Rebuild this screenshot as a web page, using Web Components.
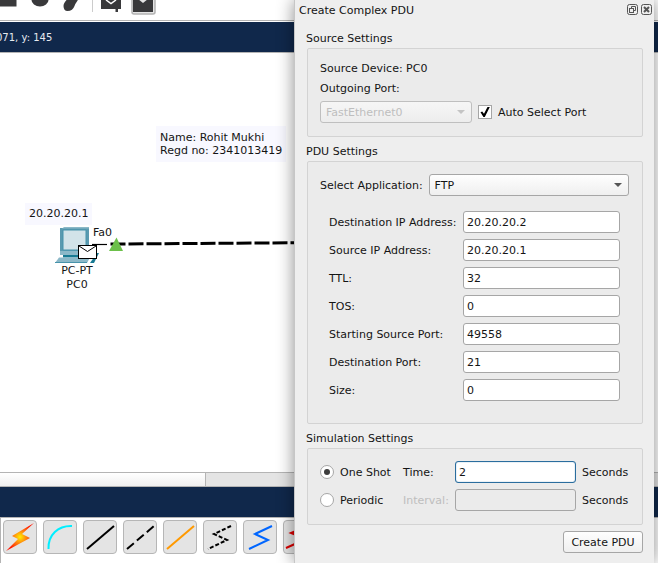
<!DOCTYPE html>
<html lang="en">
<head>
<meta charset="utf-8">
<title>Create Complex PDU</title>
<style>
  html, body { height: 100%; margin: 0; }
  body { font: 11px/14px "DejaVu Sans", sans-serif; color: #141414; background: #fff; overflow: hidden; }
</style>
</head>
<body>
<sim-desktop></sim-desktop>

<template id="sim-desktop">
  <style>
    :host { display: block; position: relative; height: 100%; overflow: hidden; }
    main { display: flex; flex-direction: column; height: 100%; }
    .band { flex: none; height: 30px; display: flex; align-items: center; background: #10284b; color: #e6eaf0; font-size: 10px; border-bottom: 1px solid #b4b4b4; }
    .coords { margin-left: -4px; padding-top: 2px; }
    canvas-view { flex: 1; }
    .scroll { flex: none; height: 13px; display: flex; border: solid #b4b4b4; border-width: 1px 0; background: #e4e4e4; }
    .thumb { width: 205px; border-right: 1px solid #b4b4b4; background: linear-gradient(#fff, #f0f0f0); }
    pdu-dialog { position: absolute; top: 0; bottom: 0; left: 294px; right: 4px; }
  </style>
  <main>
    <tool-strip></tool-strip>
    <div class="band"><span class="coords">071, y: 145</span></div>
    <canvas-view></canvas-view>
    <div class="scroll"><div class="thumb"></div></div>
    <div class="band"></div>
    <cable-bar></cable-bar>
  </main>
  <pdu-dialog></pdu-dialog>
</template>

<template id="tool-strip">
  <style>
    :host { display: block; flex: none; height: 20px; border-bottom: 1px solid #b4b4b4; margin-bottom: 1px; overflow: hidden; }
    svg { display: block; }
  </style>
  <svg width="294" height="20" aria-hidden="true">
    <rect x="-4" y="-8" width="20.500" height="14.500" fill="#39393b"/>
    <ellipse cx="40" cy="0" rx="8.500" ry="6.500" fill="#39393b"/>
    <path d="M63.500 6C63.500 2 67 1 68 -3L78 -3C79 1 75.500 2 74.500 6C73.500 9 71 11 67.500 11C65 11 63.500 9 63.500 6Z" fill="#39393b"/>
    <path d="M92.500 0V12" stroke="#ccc"/>
    <path d="M101 0H121V9H118V12H115.500V9H101Z" fill="#39393b"/>
    <path d="M106 0L111 3.500L116 0" fill="none" stroke="#fff" stroke-width="1.500"/>
    <rect x="132" y="-8" width="23" height="22" rx="2" fill="#e5e5e5" stroke="#b2b2b2" stroke-width="1.500"/>
    <path d="M133 0H153V12H133Z" fill="#39393b"/>
    <path d="M138 -1L143 3L148 -1Z" fill="#e5e5e5"/>
  </svg>
</template>

<template id="canvas-view">
  <style>
    :host { display: block; position: relative; min-height: 0; overflow: hidden; background: #fff; }
    svg, .note, .tag { position: absolute; }
    svg { left: 0; top: 0; }
    .note { background: #f8f8ff; white-space: nowrap; }
    .owner { left: 156px; top: 73px; padding: 5px 4px; line-height: 13px; }
    .addr { left: 25px; top: 150px; padding: 4px; }
    .port { left: 93px; top: 173px; }
    .name { left: 77px; top: 211px; transform: translateX(-50%); text-align: center; white-space: nowrap; }
  </style>
  <div class="note owner">Name: Rohit Mukhi<br>Regd no: 2341013419</div>
  <div class="note addr">20.20.20.1</div>
  <svg width="500" height="300" aria-hidden="true">
    <path d="M92 191.500H107" stroke="#000" stroke-width="1.200"/>
    <path d="M110.500 191L500 188.500" stroke="#000" stroke-width="3" stroke-dasharray="15 3"/>
    <path d="M109 198L116.500 184.500L123 198Z" fill="#6cc04a"/>
    <path d="M60 175H89V202H60Z" fill="#5a9ab0"/>
    <path d="M64 174H89V175.500H62Z" fill="#8bb8c8"/>
    <path d="M63 177H86V197H63Z" fill="#d2e3e9" stroke="#4793ab"/>
    <path d="M60 198H90V202H60Z" fill="#8bb8c8"/>
    <path d="M63 202H90V204.500H63Z" fill="#177a93"/>
    <path d="M59 204.500H90L87 210H55Z" fill="#8bb8c8"/>
    <path d="M55 209H87V210H55Z" fill="#4793ab"/>
    <path d="M90 210L97 200H99L94 210Z" fill="#177a93"/>
    <rect x="78.500" y="192.500" width="18" height="13" fill="#fff" stroke="#000"/>
    <path d="M79 193L87.500 198.500L96 193" fill="none" stroke="#000"/>
  </svg>
  <div class="tag port">Fa0</div>
  <div class="tag name">PC-PT<br>PC0</div>
</template>

<template id="cable-bar">
  <style>
    :host { display: flex; flex: none; height: 45px; gap: 6px; padding: 2px 0 0 2px; border-left: 1px solid #b4b4b4; box-sizing: border-box; overflow: hidden; }
    button { flex: none; box-sizing: border-box; width: 34px; height: 34px; padding: 0; border: 1px solid #b6b6b6; border-radius: 4px; background: #e4e4e4; }
    svg { display: block; }
  </style>
  <button aria-label="Automatic connection"><svg width="32" height="32"><defs><radialGradient id="g"><stop offset="0" stop-color="#fff000"/><stop offset=".5" stop-color="#ff7a10"/><stop offset="1" stop-color="#ff1500"/></radialGradient></defs><path d="M30 2L8 15L14 18L2 30L26 17L18 13Z" fill="url(#g)"/></svg></button>
  <button aria-label="Console"><svg width="32" height="32"><path d="M4.500 28C4 14 14 4.500 28 5" fill="none" stroke="#00eeff" stroke-width="2"/></svg></button>
  <button aria-label="Copper straight-through"><svg width="32" height="32"><path d="M3 28L30 5" stroke="#000" stroke-width="2"/></svg></button>
  <button aria-label="Copper cross-over"><svg width="32" height="32"><path d="M3 28L30 5" stroke="#000" stroke-width="2" stroke-dasharray="9 4"/></svg></button>
  <button aria-label="Fiber"><svg width="32" height="32"><path d="M3 28L30 5" stroke="#ff9900" stroke-width="2"/></svg></button>
  <button aria-label="Phone"><svg width="32" height="32"><path d="M27 5L10 13L23 19L4 28" fill="none" stroke="#000" stroke-width="2" stroke-dasharray="4 2"/></svg></button>
  <button aria-label="Coaxial"><svg width="32" height="32"><path d="M28 5L11 13L24 19L5 28" fill="none" stroke="#0066ff" stroke-width="2"/></svg></button>
  <button aria-label="Serial"><svg width="32" height="32"><path d="M26 4L7 12L22 18L2 27" fill="none" stroke="#dd0000" stroke-width="2"/></svg></button>
</template>

<template id="group-section">
  <style>
    :host { display: block; }
    h2 { margin: 0 0 0 -1px; padding-top: 2px; font: inherit; line-height: 18px; }
    .box { border: 1px solid #d3d3d3; border-radius: 2px; background: #ebebeb; padding: 12px 12px 13px; }
  </style>
  <section><h2></h2><div class="box"><slot></slot></div></section>
</template>

<template id="combo-box">
  <style>
    :host { display: flex; align-items: center; gap: 6px; }
    .wrap { flex: 1; display: grid; align-items: center; }
    .wrap > * { grid-area: 1 / 1; }
    select { appearance: none; box-sizing: border-box; width: 100%; height: 22px; margin: 0; padding: 1px 20px 0 5px; font: inherit; color: inherit; border: 1px solid #a6a6a6; border-radius: 3px; background: linear-gradient(#fefefe, #efefef); }
    select:disabled { color: #bebebe; opacity: 1; border-color: #bfbfbf; background: linear-gradient(#f6f6f6, #ededed); }
    svg { justify-self: end; margin-right: 7px; pointer-events: none; fill: #555; }
    select:disabled + svg { fill: #c4c4c4; }
    label { padding-top: 2px; }
    label:empty { display: none; }
  </style>
  <label for="s"></label>
  <span class="wrap"><select id="s"></select><svg width="8" height="4" aria-hidden="true"><path d="M0 0H8L4 4Z"/></svg></span>
</template>

<template id="form-field">
  <style>
    :host { display: grid; grid-template-columns: var(--label, 134px) 1fr; align-items: center; }
    label { padding-top: 2px; }
    input { box-sizing: border-box; width: 100%; min-width: 0; height: 22px; margin: 0; padding: 1px 3px 0; font: inherit; color: inherit; border: 1px solid #a6a6a6; border-radius: 3px; background: #fff; outline: none; }
    input:disabled { background: #ebebeb; }
    :host([disabled]) label { color: #bebebe; }
    :host([active]) input { border-color: #2a6d9e; box-shadow: inset 0 0 1px #2a6d9e; }
  </style>
  <label for="i"></label><input id="i" type="text">
</template>

<template id="choice-field">
  <style>
    :host { display: block; }
    label { display: flex; align-items: center; gap: 6px; white-space: nowrap; }
    span { padding-top: 2px; }
    input { appearance: none; box-sizing: border-box; display: grid; place-content: center; width: 14px; height: 14px; margin: 0; border: 1px solid #a6a6a6; background: #fff; }
    input[type=radio] { border-radius: 50%; }
    input[type=radio]:checked::before { content: ""; width: 6px; height: 6px; border-radius: 50%; background: #3c3c3c; }
    input[type=checkbox]:checked::before { content: ""; width: 10px; height: 10px; background: #000; clip-path: polygon(5% 52%, 22% 44%, 40% 68%, 75% 0, 98% 0, 48% 100%, 34% 100%); }
  </style>
  <label><input><span></span></label>
</template>

<template id="pdu-dialog">
  <style>
    :host { display: block; box-sizing: border-box; overflow: visible; background: #eee; border: solid #c6c6c6; border-width: 0 0 0 1px; box-shadow: 0 0 16px rgba(0, 0, 0, .45); }
    header { display: flex; align-items: flex-start; gap: 3px; box-sizing: border-box; height: 20px; padding: 4px 2px 0 4px; }
    h1 { flex: 1; margin: 0; font: inherit; }
    header button { display: block; width: 11px; height: 11px; padding: 0; border: 0; background: none; }
    header svg { display: block; }
    form { display: flex; flex-direction: column; gap: 4px; padding: 8px 11px 10px 12px; }
    p { margin: 0; line-height: 20px; }
    .device { margin-top: -2px; }
    .port { display: flex; align-items: center; gap: 6px; margin: 2px 0 0; }
    .port combo-box { width: 152px; }
    .app { margin-right: 1px; }
    .fields { display: grid; gap: 6px; padding: 15px 10px 9px 9px; }
    .sim { display: grid; grid-template-columns: 77px minmax(0, 1fr) 48px; column-gap: 6px; row-gap: 6px; align-items: center; }
    .sim form-field { --label: 52px; }
    .sim > span { padding-top: 2px; }
    .create { align-self: flex-end; height: 22px; min-width: 80px; margin-top: 2px; padding: 1px 7px 0; font: inherit; color: inherit; border: 1px solid #a6a6a6; border-radius: 3px; background: linear-gradient(#fefefe, #efefef); }
  </style>
  <header>
    <h1>Create Complex PDU</h1>
    <button aria-label="Float"><svg width="11" height="11" fill="none" stroke="#555"><rect x=".5" y=".5" width="10" height="10" rx="2"/><rect x="2.500" y="4.500" width="4" height="4"/><path d="M4.500 4V2.500H8.500V6.500H7"/></svg></button>
    <button aria-label="Close"><svg width="11" height="11" fill="none" stroke="#555"><rect x=".5" y=".5" width="10" height="10" rx="2"/><path d="M3 3L8 8M8 3L3 8" stroke-width="2"/></svg></button>
  </header>
  <form>
    <group-section heading="Source Settings">
      <p class="device">Source Device: PC0</p>
      <p>Outgoing Port:</p>
      <div class="port"><combo-box name="Outgoing Port" value="FastEthernet0" disabled></combo-box><choice-field type="checkbox" label="Auto Select Port" checked></choice-field></div>
    </group-section>
    <group-section heading="PDU Settings">
      <combo-box class="app" label="Select Application:" value="FTP"></combo-box>
      <div class="fields">
        <form-field label="Destination IP Address:" value="20.20.20.2"></form-field>
        <form-field label="Source IP Address:" value="20.20.20.1"></form-field>
        <form-field label="TTL:" value="32"></form-field>
        <form-field label="TOS:" value="0"></form-field>
        <form-field label="Starting Source Port:" value="49558"></form-field>
        <form-field label="Destination Port:" value="21"></form-field>
        <form-field label="Size:" value="0"></form-field>
      </div>
    </group-section>
    <group-section heading="Simulation Settings">
      <div class="sim">
        <choice-field type="radio" label="One Shot" checked></choice-field>
        <form-field label="Time:" value="2" active></form-field><span>Seconds</span>
        <choice-field type="radio" label="Periodic"></choice-field>
        <form-field label="Interval:" disabled></form-field><span>Seconds</span>
      </div>
    </group-section>
    <button class="create" type="button">Create PDU</button>
  </form>
</template>

<script>
  class Base extends HTMLElement {
    constructor() {
      super();
      const root = this.attachShadow({ mode: "open" });
      root.append(document.getElementById(this.localName).content.cloneNode(true));
    }
    $(selector) { return this.shadowRoot.querySelector(selector); }
  }
  class GroupSection extends Base {
    connectedCallback() { this.$("h2").textContent = this.getAttribute("heading"); }
  }
  class ComboBox extends Base {
    connectedCallback() {
      const select = this.$("select");
      this.$("label").textContent = this.getAttribute("label") || "";
      if (this.hasAttribute("name")) select.setAttribute("aria-label", this.getAttribute("name"));
      select.replaceChildren(new Option(this.getAttribute("value")));
      select.disabled = this.hasAttribute("disabled");
    }
  }
  class FormField extends Base {
    connectedCallback() {
      this.$("label").textContent = this.getAttribute("label");
      this.$("input").value = this.getAttribute("value") || "";
      this.$("input").disabled = this.hasAttribute("disabled");
    }
  }
  class ChoiceField extends Base {
    connectedCallback() {
      const input = this.$("input");
      input.type = this.getAttribute("type");
      input.checked = this.hasAttribute("checked");
      this.$("span").textContent = this.getAttribute("label");
      if (input.type === "radio") {
        input.addEventListener("change", () => {
          for (const other of this.parentNode.querySelectorAll("choice-field")) {
            if (other !== this) other.$("input").checked = false;
          }
        });
      }
    }
  }
  customElements.define("group-section", GroupSection);
  customElements.define("combo-box", ComboBox);
  customElements.define("form-field", FormField);
  customElements.define("choice-field", ChoiceField);
  for (const name of ["tool-strip", "canvas-view", "cable-bar", "pdu-dialog", "sim-desktop"]) {
    customElements.define(name, class extends Base {});
  }
</script>
</body>
</html>
